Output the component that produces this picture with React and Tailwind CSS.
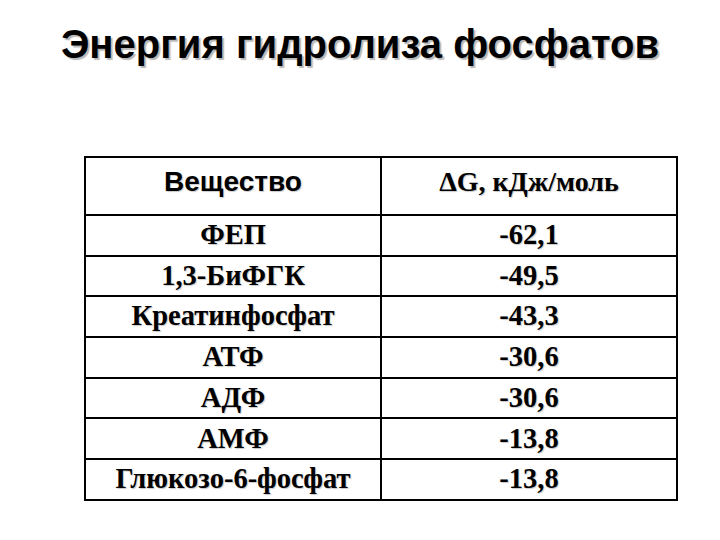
const ROWS = [
  ["ФЕП", "-62,1"],
  ["1,3-БиФГК", "-49,5"],
  ["Креатинфосфат", "-43,3"],
  ["АТФ", "-30,6"],
  ["АДФ", "-30,6"],
  ["АМФ", "-13,8"],
  ["Глюкозо-6-фосфат", "-13,8"],
];

export default function App() {
  return (
    <div className="w-[720px] h-[540px] bg-white overflow-hidden">
      {/* заголовок */}
      <h1 className="pt-[20px] text-center text-[40px] leading-[48px] font-bold text-black font-['Liberation_Sans',Arial,sans-serif] [text-shadow:2px_2px_1px_#b8b8b8]">
        Энергия гидролиза фосфатов
      </h1>

      {/* таблица */}
      <table className="mt-[88px] ml-[84px] w-[594px] border-collapse border-2 border-black table-fixed">
        <thead>
          <tr className="h-[58px]">
            <th className="w-1/2 pb-[8px] border-2 border-black text-[28px] leading-none font-bold font-['Liberation_Sans',Arial,sans-serif] [text-shadow:1px_1px_1px_#c8c8c8]">
              Вещество
            </th>
            <th className="w-1/2 pb-[8px] border-2 border-black text-[28px] leading-none font-bold font-['Liberation_Serif','Times_New_Roman',serif] [text-shadow:1px_1px_1px_#c8c8c8]">
              ΔG, кДж/моль
            </th>
          </tr>
        </thead>
        <tbody>
          {ROWS.map(([name, dg]) => (
            <tr key={name} className="h-[40.7px]">
              <td className="border-2 border-black text-center text-[28.5px] leading-none font-bold font-['Liberation_Serif','Times_New_Roman',serif] [text-shadow:1px_1px_1px_#c8c8c8]">
                {name}
              </td>
              <td className="border-2 border-black text-center text-[28.5px] leading-none font-bold font-['Liberation_Serif','Times_New_Roman',serif] [text-shadow:1px_1px_1px_#c8c8c8]">
                {dg}
              </td>
            </tr>
          ))}
        </tbody>
      </table>
    </div>
  );
}
